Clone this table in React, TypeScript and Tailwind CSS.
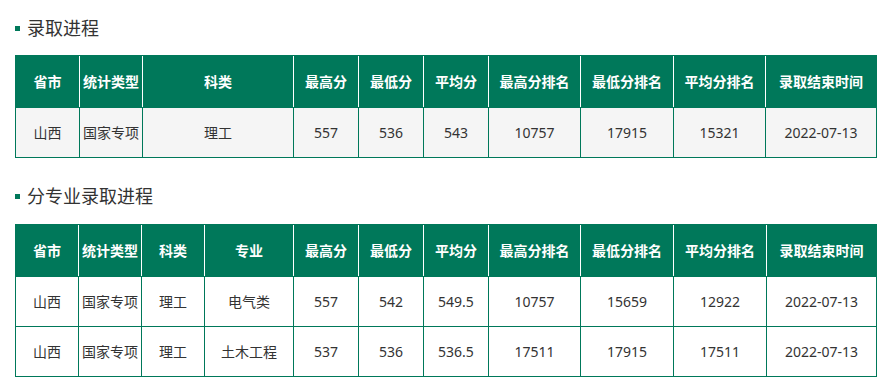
import React from "react";

const font = { fontFamily: '"Microsoft YaHei", "Noto Sans", "Noto Sans CJK SC", sans-serif' };

type Col = { label: string; w: number };

const cols1: Col[] = [
  { label: "省市", w: 63 },
  { label: "统计类型", w: 63 },
  { label: "科类", w: 151 },
  { label: "最高分", w: 65 },
  { label: "最低分", w: 65 },
  { label: "平均分", w: 65 },
  { label: "最高分排名", w: 92 },
  { label: "最低分排名", w: 93 },
  { label: "平均分排名", w: 92 },
  { label: "录取结束时间", w: 111 },
];

const rows1 = [["山西", "国家专项", "理工", "557", "536", "543", "10757", "17915", "15321", "2022-07-13"]];

const cols2: Col[] = [
  { label: "省市", w: 62 },
  { label: "统计类型", w: 63 },
  { label: "科类", w: 63 },
  { label: "专业", w: 89 },
  { label: "最高分", w: 65 },
  { label: "最低分", w: 65 },
  { label: "平均分", w: 65 },
  { label: "最高分排名", w: 92 },
  { label: "最低分排名", w: 93 },
  { label: "平均分排名", w: 93 },
  { label: "录取结束时间", w: 110 },
];

const rows2 = [
  ["山西", "国家专项", "理工", "电气类", "557", "542", "549.5", "10757", "15659", "12922", "2022-07-13"],
  ["山西", "国家专项", "理工", "土木工程", "537", "536", "536.5", "17511", "17915", "17511", "2022-07-13"],
];

function Heading({ title }: { title: string }) {
  return (
    <div className="flex h-6 items-center">
      <span className="ml-[15px] mr-[7px] inline-block h-[5px] w-[5px] bg-[#00785a]" />
      <span className="text-[18px] leading-6 text-[#333]">{title}</span>
    </div>
  );
}

function DataTable({ cols, rows, bodyBg }: { cols: Col[]; rows: string[][]; bodyBg: string }) {
  return (
    <table className="ml-[15px] table-fixed border-separate border-spacing-0 border border-[#00785a]">
      <colgroup>
        {cols.map((c, i) => (
          <col key={i} style={{ width: c.w }} />
        ))}
      </colgroup>
      <thead>
        <tr className="h-[51px] bg-[#00785a]">
          {cols.map((c, i) => (
            <th
              key={i}
              className={`p-0 text-center text-[14px] font-bold text-white ${i > 0 ? "border-l border-white" : ""}`}
            >
              {c.label}
            </th>
          ))}
        </tr>
      </thead>
      <tbody>
        {rows.map((r, ri) => (
          <tr key={ri} className={`h-[50px] ${bodyBg}`}>
            {r.map((v, i) => (
              <td
                key={i}
                className={`border-t border-[#00785a] p-0 text-center text-[14px] text-[#333] ${i > 0 ? "border-l" : ""}`}
              >
                {v}
              </td>
            ))}
          </tr>
        ))}
      </tbody>
    </table>
  );
}

export default function App() {
  return (
    <div className="h-[390px] w-[889px] bg-white pt-4" style={font}>
      <Heading title="录取进程" />
      <div className="mt-[15px]">
        <DataTable cols={cols1} rows={rows1} bodyBg="bg-[#f5f5f5]" />
      </div>
      <div className="mt-[26px]">
        <Heading title="分专业录取进程" />
      </div>
      <div className="mt-4">
        <DataTable cols={cols2} rows={rows2} bodyBg="bg-white" />
      </div>
    </div>
  );
}
